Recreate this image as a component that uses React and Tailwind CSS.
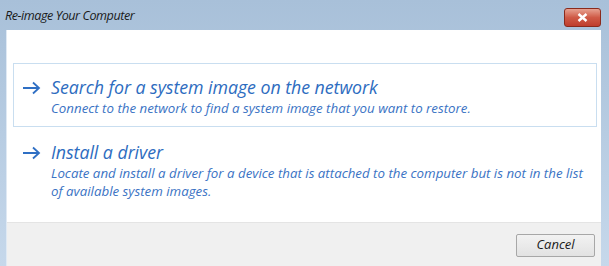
function Arrow({ className }) {
  return (
    <svg className={className} width="19" height="14" viewBox="0 0 19 14" fill="none">
      <path d="M1 7h16M11 1.5l6 5.5-6 5.5" stroke="#2f6fc4" strokeWidth="1.8" />
    </svg>
  );
}

function Option({ title, desc, boxed }) {
  return (
    <div
      className={
        'flex items-start pl-[8px] pr-3 ' +
        (boxed ? 'border border-[#c9def0] bg-white h-[64px] pt-[11px]' : 'border border-transparent pt-[12px]')
      }
    >
      <Arrow className="mt-[6px] shrink-0" />
      <div className="ml-[10px] italic text-[#2d6cc0]">
        <div className="text-[17.8px] leading-[24px] tracking-[-0.05px]">{title}</div>
        <div className="text-[13.3px] leading-[18px] text-[#3a73c4]">{desc}</div>
      </div>
    </div>
  );
}

export default function App() {
  return (
    <div
      className="w-[609px] h-[266px] flex flex-col bg-gradient-to-b from-[#a8c0d9] to-[#c6d8eb] overflow-hidden"
      style={{ fontFamily: '"Open Sans", "Noto Sans", sans-serif' }}
    >
      <div className="h-[30px] flex items-center justify-between pl-[5px] pr-[8px] shrink-0">
        <span className="italic text-[12.6px] tracking-[-0.45px] text-[#1b1b1b] mt-[3px]">Re-image Your Computer</span>
        <div className="w-[37px] h-[19px] mt-[5px] rounded-[3px] border border-[#8a2a1c] bg-gradient-to-b from-[#e6a191] via-[#cf5a46] to-[#bf3d2d] flex items-center justify-center">
          <svg width="11" height="9" viewBox="0 0 11 9">
            <path d="M1.5 1l8 7M9.5 1l-8 7" stroke="#fff" strokeWidth="2.4" />
          </svg>
        </div>
      </div>
      <div className="flex-1 flex flex-col ml-[6px] mr-[8px] border-l border-[#dfe9f4] bg-white">
        <div className="flex-1 pt-[33px] pl-[6px] pr-[4px]">
          <Option
            boxed
            title="Search for a system image on the network"
            desc="Connect to the network to find a system image that you want to restore."
          />
          <Option
            title="Install a driver"
            desc={
              <>
                Locate and install a driver for a device that is attached to the computer but is not in the list
                <br />
                of available system images.
              </>
            }
          />
        </div>
        <div className="h-[44px] shrink-0 bg-[#f0f0f0] border-t border-[#e4e4e4] flex items-center justify-end pr-[6px]">
          <button className="w-[79px] h-[23px] mt-[1px] border border-[#a7a7a7] bg-gradient-to-b from-[#f2f2f2] to-[#e2e2e2] italic text-[13px] text-[#1b1b1b] rounded-[2px]">
            Cancel
          </button>
        </div>
      </div>
    </div>
  );
}
